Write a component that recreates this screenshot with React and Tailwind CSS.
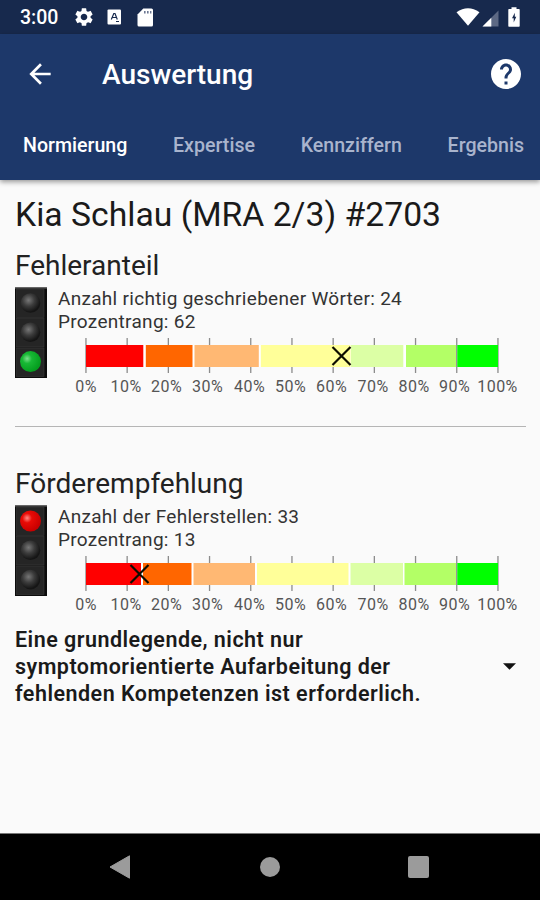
import { MdArrowBack, MdHelp, MdSettings } from 'react-icons/md';

const TABS = ['Normierung', 'Expertise', 'Kennziffern', 'Ergebnis'];

const COLORS = ['#ff0000', '#ff6600', '#ffb873', '#ffff99', '#dcffa5', '#b3ff66', '#00ff00'];

const LABELS = [
  [86, '0%'],
  [126, '10%'],
  [166.5, '20%'],
  [207.5, '30%'],
  [249.5, '40%'],
  [290.5, '50%'],
  [331.5, '60%'],
  [373, '70%'],
  [414, '80%'],
  [454.5, '90%'],
  [497.5, '100%'],
];

const StatusBar = () => (
  <div className="flex h-[34px] shrink-0 items-center bg-[#17294d] px-[20px] text-white">
    <span className="w-[55px] pt-[2px] text-[19.5px] font-medium leading-none">3:00</span>
    <MdSettings className="-ml-[2px] h-[22px] w-[22px]" />
    <svg className="ml-[12px] h-[16px] w-[15px]" viewBox="0 0 15 16">
      <rect x="0.5" y="0.5" width="13.5" height="15" rx="1" fill="#fff" />
      <path d="M4.3 10.5L6.8 4.5h1.2l2.3 6M5.3 8.5h4M9 12.5h3" fill="none" stroke="#17294d" strokeWidth="1.2" />
    </svg>
    <svg className="ml-[15px] h-[19px] w-[17px]" viewBox="0 0 17 19">
      <path d="M6.3 0.5H14.5Q16 0.5 16 2V17Q16 18.5 14.5 18.5H2Q0.5 18.5 0.5 17V6.5Z" fill="#fff" />
      <path d="M7 3h1.6v2.5H7zM10 3h1.6v2.5H10zM13 3h1.4v2.5H13z" fill="#6d7893" />
    </svg>
    <div className="ml-auto flex items-center">
      <svg className="h-[18px] w-[24px]" viewBox="0 0 24 18">
        <path d="M0.5 4.2Q12 -3.6 23.5 4.2L12 17.7Z" fill="#fff" />
      </svg>
      <svg className="ml-[2px] mt-[2px] h-[17px] w-[17px]" viewBox="0 0 17 17">
        <path d="M0.5 16.5L16.5 0.5V16.5Z" fill="#5d6984" />
        <path d="M0.5 16.5L9.3 7.7V16.5Z" fill="#fff" />
      </svg>
      <svg className="ml-[9px] h-[20px] w-[12px]" viewBox="0 0 12 20">
        <path d="M3.5 0.3h5v1.7H11q0.7 0 0.7 0.7V19q0 0.7-0.7 0.7H1q-0.7 0-0.7-0.7V2.7Q0.3 2 1 2h2.5z" fill="#fff" />
        <path d="M6.8 5.8L4 11.2h1.7v4.2L8.3 9.8H6.8z" fill="#17294d" />
      </svg>
    </div>
  </div>
);

const Header = () => (
  <header className="z-10 h-[146px] shrink-0 bg-[#1d386a] shadow-[0_2px_5px_rgba(0,0,0,0.4)]">
    <div className="flex h-[80px] items-center pl-[24px] pr-[16px] text-white">
      <MdArrowBack className="h-[32px] w-[32px]" />
      <h1 className="ml-[46px] pt-[2px] text-[28px] font-medium">Auswertung</h1>
      <MdHelp className="ml-auto h-[36px] w-[36px]" />
    </div>
    <nav className="flex h-[64px] items-center gap-[45.7px] whitespace-nowrap pl-[23px] text-[19.6px] font-medium">
      {TABS.map((tab, i) => (
        <span key={tab} className={i === 0 ? 'text-white' : 'text-[#a9b4cd]'}>
          {tab}
        </span>
      ))}
    </nav>
  </header>
);

/**
 * Traffic light, `active` is the index of the lamp that is on
 */
const TrafficLight = ({ active, color }) => (
  <svg className="h-[91px] w-[32px] shrink-0" viewBox="0 0 32 91">
    <defs>
      <radialGradient id="lamp-off" cx="0.4" cy="0.36" r="0.6">
        <stop offset="0" stopColor="#777" />
        <stop offset="0.5" stopColor="#3c3c3c" />
        <stop offset="1" stopColor="#151515" />
      </radialGradient>
      <radialGradient id="lamp-red" cx="0.34" cy="0.36" r="0.65">
        <stop offset="0" stopColor="#ff8a84" />
        <stop offset="0.35" stopColor="#e80b06" />
        <stop offset="1" stopColor="#c80000" />
      </radialGradient>
      <radialGradient id="lamp-green" cx="0.34" cy="0.36" r="0.65">
        <stop offset="0" stopColor="#7ee08e" />
        <stop offset="0.35" stopColor="#18b835" />
        <stop offset="1" stopColor="#049d1e" />
      </radialGradient>
    </defs>
    <rect width="32" height="91" fill="#0c0c0c" />
    <rect width="32" height="1.5" fill="#666" />
    {[0, 1, 2].map((i) => (
      <g key={i}>
        <rect x="1.5" y={2 + i * 29.5} width="27.5" height="28.5" fill="#252525" stroke="#3a3a3a" strokeWidth="0.6" />
        <circle
          cx="15.5"
          cy={16 + i * 29.3}
          r={i === active ? 10.5 : 9.8}
          fill={i === active ? `url(#lamp-${color})` : 'url(#lamp-off)'}
        />
      </g>
    ))}
  </svg>
);

// The scale runs from x=86 (0%) to x=498 (100%)
const PercentScale = ({ segments, marker }) => (
  <svg className="block h-[66px] w-[540px]" viewBox="0 0 540 66">
    {LABELS.map(([x, label], i) => (
      <g key={label}>
        <rect x={85.3 + i * 41.2} y="4" width="1.3" height="35" fill="#8c8c8c" />
        <text x={x} y="58" textAnchor="middle" fontSize="16" letterSpacing="0.5" fill="#555">
          {label}
        </text>
      </g>
    ))}
    <rect x="86" y="11" width="370" height="22" fill="#fff" />
    {segments.map(([from, to], i) => (
      <rect key={from} x={from} y="11" width={to - from} height="22" fill={COLORS[i]} />
    ))}
    <path
      d={`M${marker - 9} 13l18 18m0-18l-18 18`}
      fill="none"
      stroke="#0d0d00"
      strokeWidth="2.2"
    />
  </svg>
);

const Result = ({ title, lamp, color, lines, segments, marker }) => (
  <section>
    <h3 className="h-[37px] pl-[15px] text-[28px] leading-[37px] text-[#222]">{title}</h3>
    <div className="flex h-[50px] pl-[15px] pt-[3px]">
      <TrafficLight active={lamp} color={color} />
      <div className="ml-[11px] whitespace-nowrap pt-px text-[19px] leading-[22.5px] tracking-[0.3px] text-[#333]">
        {lines.map((line) => (
          <p key={line}>{line}</p>
        ))}
      </div>
    </div>
    <PercentScale segments={segments} marker={marker} />
  </section>
);

const NavigationBar = () => (
  <footer className="mt-auto flex h-[67px] shrink-0 items-center border-t border-[#777] bg-black pl-[109px]">
    <svg className="h-[24px] w-[22px]" viewBox="0 0 22 24">
      <path d="M1 12L20.5 0.8V23.2Z" fill="#9b9b9b" stroke="#9b9b9b" strokeLinejoin="round" />
    </svg>
    <div className="ml-[129px] h-[20px] w-[20px] rounded-full bg-[#9b9b9b]" />
    <div className="ml-[128px] h-[22px] w-[21px] rounded-[2px] bg-[#9b9b9b]" />
  </footer>
);

const App = () => {
  return (
    <div className="flex h-[900px] w-[540px] flex-col overflow-hidden bg-[#fafafa] font-[Roboto,sans-serif]">
      <StatusBar />
      <Header />
      <main className="flex flex-col">
        <h2 className="h-[67px] whitespace-nowrap pl-[15px] text-[33.7px] leading-[69px] text-[#1a1a1a]">
          Kia Schlau (MRA 2/3) #2703
        </h2>
        <Result
          title="Fehleranteil"
          lamp={2}
          color="green"
          lines={['Anzahl richtig geschriebener Wörter: 24', 'Prozentrang: 62']}
          segments={[
            [86, 143.3],
            [145.8, 192.5],
            [194.5, 258.8],
            [260.8, 350.5],
            [351, 403.3],
            [406, 456],
            [457.3, 498],
          ]}
          marker={341.5}
        />
        <hr className="ml-[15px] mr-[14px] mt-[26px] border-t border-[#b5b5b5]" />
        <div className="h-[38px]" />
        <Result
          title="Förderempfehlung"
          lamp={0}
          color="red"
          lines={['Anzahl der Fehlerstellen: 33', 'Prozentrang: 13']}
          segments={[
            [86, 141],
            [143, 191.5],
            [193.5, 255],
            [257, 348.5],
            [350.5, 403],
            [404.5, 456],
            [457.3, 498],
          ]}
          marker={139.5}
        />
        <div className="flex items-center pl-[15px] pr-[24px] pt-[8px]">
          <p className="whitespace-nowrap text-[21.5px] font-semibold leading-[27px] tracking-[0.48px] text-[#1a1a1a]">
            Eine grundlegende, nicht nur <br />
            symptomorientierte Aufarbeitung der <br />
            fehlenden Kompetenzen ist erforderlich.
          </p>
          <svg className="ml-auto h-[7px] w-[13px]" viewBox="0 0 13 7">
            <path d="M0 0.3H13L6.5 6.8Z" fill="#111" />
          </svg>
        </div>
      </main>
      <NavigationBar />
    </div>
  );
};

export default App;
